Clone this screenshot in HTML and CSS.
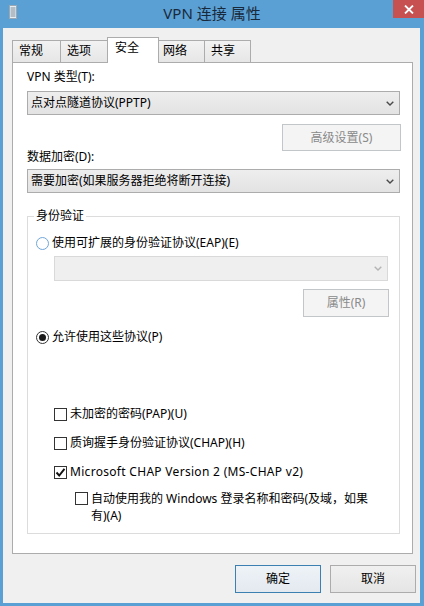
FILE: index.html
```html
<!DOCTYPE html>
<html lang="zh-CN">
<head>
<meta charset="utf-8">
<title>VPN 连接 属性</title>
<link rel="stylesheet" href="styles.css">
</head>
<body>
<div class="window">
  <div class="titlebar">
    <svg class="app-icon" width="9" height="14" viewBox="0 0 9 14">
      <rect x="0.5" y="0.5" width="7" height="13" fill="#e9eef3" stroke="#9aa7b4"/>
      <path d="M1.5 3h5M1.5 5h5M1.5 7h5M1.5 9h5M1.5 11h5" stroke="#7f8c99" stroke-width="1"/>
    </svg>
    <div class="title">VPN 连接 属性</div>
    <div class="close">
      <svg width="10" height="9" viewBox="0 0 10 9"><path d="M1 0.5l8 8M9 0.5l-8 8" stroke="#fff" stroke-width="1.8"/></svg>
    </div>
  </div>
  <div class="client">
    <div class="tabs">
      <div class="tab t1">常规</div>
      <div class="tab t2">选项</div>
      <div class="tab active">安全</div>
      <div class="tab t4">网络</div>
      <div class="tab t5">共享</div>
    </div>
    <div class="panel">
      <div class="label">VPN 类型(T):</div>
      <div class="combo">
        <span>点对点隧道协议(PPTP)</span>
        <svg class="chev" width="8" height="5" viewBox="0 0 8 5"><path d="M0.7 0.7L4 4l3.3-3.3" fill="none" stroke="#4a4a4a" stroke-width="1.4"/></svg>
      </div>
      <div class="btn-row"><button class="btn disabled btn-adv">高级设置(S)</button></div>
      <div class="label label-tight">数据加密(D):</div>
      <div class="combo">
        <span>需要加密(如果服务器拒绝将断开连接)</span>
        <svg class="chev" width="8" height="5" viewBox="0 0 8 5"><path d="M0.7 0.7L4 4l3.3-3.3" fill="none" stroke="#4a4a4a" stroke-width="1.4"/></svg>
      </div>
      <fieldset class="group">
        <legend>身份验证</legend>
        <div class="radio-row first"><span class="radio focus"></span>使用可扩展的身份验证协议(EAP)(E)</div>
        <div class="combo combo-disabled">
          <span></span>
          <svg class="chev" width="8" height="5" viewBox="0 0 8 5"><path d="M0.7 0.7L4 4l3.3-3.3" fill="none" stroke="#b4b4b4" stroke-width="1.4"/></svg>
        </div>
        <div class="btn-row"><button class="btn disabled btn-prop">属性(R)</button></div>
        <div class="radio-row second"><span class="radio checked"></span>允许使用这些协议(P)</div>
        <div class="check-row c1"><span class="checkbox"></span>未加密的密码(PAP)(U)</div>
        <div class="check-row c2"><span class="checkbox"></span>质询握手身份验证协议(CHAP)(H)</div>
        <div class="check-row c3"><span class="checkbox"><svg width="11" height="11" viewBox="0 0 11 11"><path d="M1.5 5.5L4.2 8.5L9.5 1.8" fill="none" stroke="#111" stroke-width="1.9"/></svg></span><span class="latin">Microsoft CHAP Version 2 (MS-CHAP v2)</span></div>
        <div class="check-row c4"><span class="checkbox"></span><span class="check-text">自动使用我的 Windows 登录名称和密码(及域，如果有)(A)</span></div>
      </fieldset>
    </div>
    <div class="footer">
      <button class="btn default">确定</button>
      <button class="btn">取消</button>
    </div>
  </div>
</div>
</body>
</html>
```
FILE: styles.css
```css
html, body {
  margin: 0;
  padding: 0;
}
body {
  font-family: "Noto Sans", "Noto Sans CJK SC", sans-serif;
  font-size: 12px;
  color: #000;
}
.window {
  width: 424px;
  height: 606px;
  background: #5ba0d4;
  display: flex;
  flex-direction: column;
  overflow: hidden;
}
.titlebar {
  height: 28px;
  flex: none;
  display: grid;
  grid-template-columns: 1fr auto 1fr;
}
.app-icon {
  margin: 5px 0 0 9px;
}
.title {
  font-size: 15px;
  line-height: 26px;
  color: #18293b;
}
.close {
  justify-self: end;
  width: 31px;
  height: 18px;
  background: #c75050;
  display: flex;
  align-items: center;
  justify-content: center;
}
.client {
  flex: 1;
  margin: 0 4px 3px 3px;
  background: #f0f0f0;
  padding: 9px 7px 0 9px;
  display: flex;
  flex-direction: column;
}
.tabs {
  display: flex;
  align-items: flex-end;
  height: 25px;
  flex: none;
}
.tab {
  box-sizing: border-box;
  height: 22px;
  border: 1px solid #acacac;
  border-bottom: none;
  padding-left: 6px;
  line-height: 20px;
  background: linear-gradient(#f2f2f2, #e6e6e6);
  margin-left: -1px;
}
.t1 { width: 49px; margin-left: 0; }
.t2 { width: 48px; }
.t4 { width: 47px; padding-left: 4px; }
.t5 { width: 47px; }
.tab.active {
  width: 52px;
  height: 26px;
  margin-bottom: -1px;
  background: #fff;
  position: relative;
  z-index: 1;
  padding-left: 7px;
}
.panel {
  box-sizing: border-box;
  height: 492px;
  flex: none;
  border: 1px solid #acacac;
  background: #fff;
  padding: 6px 12px 0 14px;
}
.label {
  line-height: 16px;
}
.label-tight {
  margin-top: -2px;
}
.combo {
  box-sizing: border-box;
  height: 24px;
  margin-top: 6px;
  border: 1px solid #acacac;
  background: linear-gradient(#eeeeee, #e3e3e3);
  display: flex;
  align-items: center;
  justify-content: space-between;
  padding: 0 5px 0 3px;
  line-height: 16px;
}
.label-tight + .combo {
  margin-top: 4px;
}
.chev {
  flex: none;
}
.btn-row {
  display: flex;
  justify-content: flex-end;
  margin-right: -1px;
}
.btn {
  box-sizing: border-box;
  font: inherit;
  color: #000;
  width: 86px;
  height: 28px;
  padding: 0;
  border: 1px solid #acacac;
  background: linear-gradient(#f0f0f0, #e5e5e5);
  line-height: 16px;
}
.btn.disabled {
  background: #f4f4f4;
  border-color: #c2c6c9;
  color: #8a8a8a;
}
.btn-adv {
  width: 119px;
  height: 27px;
  margin-top: 9px;
}
.group {
  margin: 15px 0 0 0;
  padding: 0 11px 9px 8px;
  border: 1px solid #dcdcdc;
  min-width: 0;
}
.group legend {
  padding: 0 2px;
  margin-left: -2px;
  line-height: 16px;
}
.radio-row {
  display: flex;
  align-items: center;
  line-height: 16px;
}
.radio-row.first {
  margin-top: 11px;
}
.radio-row.second {
  margin-top: 12px;
}
.radio {
  box-sizing: border-box;
  width: 13px;
  height: 13px;
  border: 1px solid #333;
  border-radius: 50%;
  background: #fff;
  margin-right: 3px;
  display: flex;
  align-items: center;
  justify-content: center;
  flex: none;
}
.radio.focus {
  border-color: #6fa6d9;
}
.radio.checked::after {
  content: "";
  width: 7px;
  height: 7px;
  border-radius: 50%;
  background: #1a1a1a;
}
.combo-disabled {
  margin-top: 5px;
  margin-left: 18px;
  height: 25px;
  background: #efefef;
  border-color: #d9d9d9;
}
.btn-prop {
  margin-top: 8px;
}
.check-row {
  display: flex;
  align-items: center;
  line-height: 16px;
  margin-left: 18px;
}
.checkbox {
  box-sizing: border-box;
  width: 13px;
  height: 13px;
  border: 1px solid #333;
  background: #fff;
  margin-right: 3px;
  flex: none;
  display: flex;
  align-items: center;
  justify-content: center;
}
.latin {
  letter-spacing: 0.3px;
}
.c1 { margin-top: 61px; }
.c2 { margin-top: 13px; }
.c3 { margin-top: 13px; }
.c4 {
  margin-top: 10px;
  margin-left: 39px;
  align-items: flex-start;
  line-height: 17px;
}
.c4 .checkbox {
  margin-top: 2px;
}
.check-text {
  max-width: 286px;
}
.footer {
  display: flex;
  justify-content: flex-end;
  gap: 9px;
  margin-top: 11px;
  margin-right: -3px;
}
.btn.default {
  border-color: #3c7fb1;
  background: linear-gradient(#eef3f8, #e3e9ef);
}
```
